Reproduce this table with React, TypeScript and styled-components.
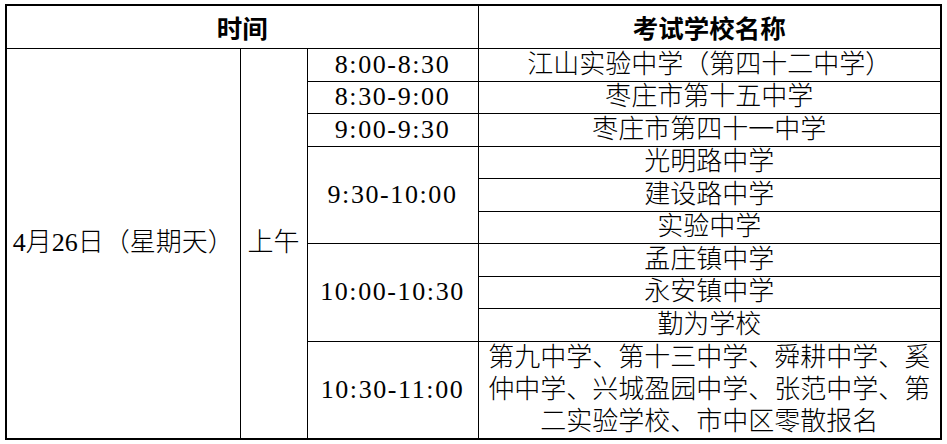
import React from "react";
import styled, { createGlobalStyle } from "styled-components";

const GlobalStyle = createGlobalStyle`
  html, body {
    margin: 0;
    padding: 0;
    background: #fff;
  }
  body {
    font-family: "Liberation Serif", "Noto Sans CJK SC", serif;
    color: #000;
  }
`;

const Page = styled.div`
  padding: 4px 0 0 5px;
`;

const Table = styled.table`
  width: 937px;
  table-layout: fixed;
  border-collapse: collapse;
  border: 2px solid #000;
`;

const Row = styled.tr<{ $h: number }>`
  height: ${(p) => p.$h}px;
`;

const HeadCell = styled.th`
  border: 1px solid #000;
  padding: 0;
  font-family: "Noto Sans CJK SC", sans-serif;
  font-weight: 700;
  font-size: 25.5px;
  line-height: 30px;
  text-align: center;
  vertical-align: middle;
`;

const Cell = styled.td<{ $lines?: number }>`
  border: 1px solid #000;
  padding: 0;
  font-size: 26px;
  font-weight: 300;
  line-height: ${(p) => ((p.$lines ?? 1) > 1 ? 32 : 28)}px;
  text-align: center;
  vertical-align: middle;
  white-space: nowrap;
`;

const TimeCell = styled(Cell)`
  font-weight: 400;
  letter-spacing: 1.6px;
`;

type Slot = { time: string; schools: string[][] };

const slots: Slot[] = [
  { time: "8:00-8:30", schools: [["江山实验中学（第四十二中学）"]] },
  { time: "8:30-9:00", schools: [["枣庄市第十五中学"]] },
  { time: "9:00-9:30", schools: [["枣庄市第四十一中学"]] },
  { time: "9:30-10:00", schools: [["光明路中学"], ["建设路中学"], ["实验中学"]] },
  { time: "10:00-10:30", schools: [["孟庄镇中学"], ["永安镇中学"], ["勤为学校"]] },
  {
    time: "10:30-11:00",
    schools: [
      [
        "第九中学、第十三中学、舜耕中学、奚",
        "仲中学、兴城盈园中学、张范中学、第",
        "二实验学校、市中区零散报名",
      ],
    ],
  },
];

const rowHeight = (lines: number, i: number) =>
  lines > 1 ? 97 : i % 2 === 0 ? 33 : 32;

export default function App() {
  const total = slots.reduce((n, s) => n + s.schools.length, 0);
  let index = 0;

  return (
    <>
      <GlobalStyle />
      <Page>
        <Table>
          <colgroup>
            <col style={{ width: 234 }} />
            <col style={{ width: 67 }} />
            <col style={{ width: 171 }} />
            <col />
          </colgroup>
          <thead>
            <Row $h={43}>
              <HeadCell colSpan={3}>时间</HeadCell>
              <HeadCell>考试学校名称</HeadCell>
            </Row>
          </thead>
          <tbody>
            {slots.map((slot, si) =>
              slot.schools.map((lines, li) => {
                const first = si === 0 && li === 0;
                const h = rowHeight(lines.length, index++);
                return (
                  <Row $h={h} key={`${si}-${li}`}>
                    {first && <Cell rowSpan={total}>4月26日（星期天）</Cell>}
                    {first && <Cell rowSpan={total}>上午</Cell>}
                    {li === 0 && (
                      <TimeCell rowSpan={slot.schools.length}>{slot.time}</TimeCell>
                    )}
                    <Cell $lines={lines.length}>
                      {lines.map((l, k) => (
                        <React.Fragment key={k}>
                          {k > 0 && <br />}
                          {l}
                        </React.Fragment>
                      ))}
                    </Cell>
                  </Row>
                );
              })
            )}
          </tbody>
        </Table>
      </Page>
    </>
  );
}
